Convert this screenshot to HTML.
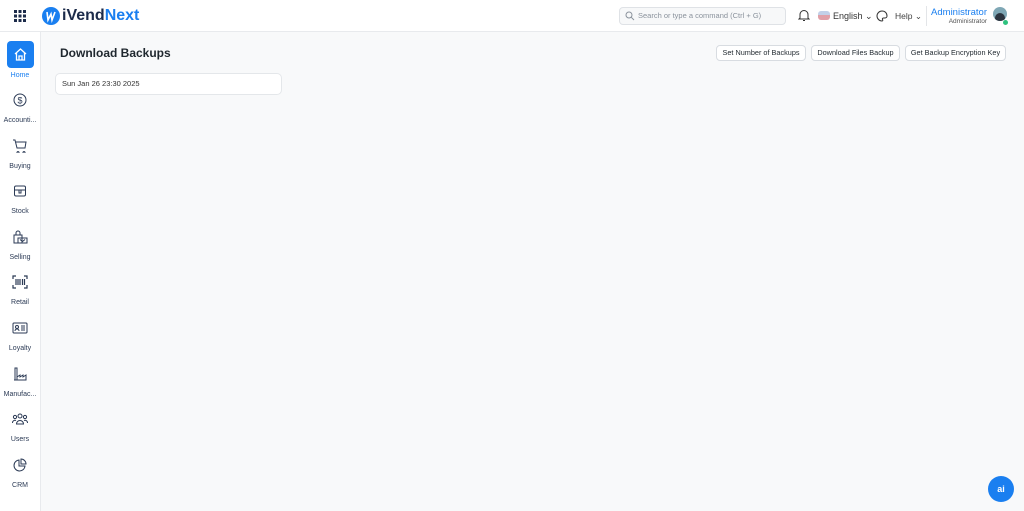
<!DOCTYPE html>
<html><head><meta charset="utf-8"><style>
*{box-sizing:border-box;margin:0;padding:0}
body{width:1024px;height:511px;overflow:hidden;background:#f8f9fa;font-family:"Liberation Sans",sans-serif;color:#1f272e;position:relative}
.hdr{position:absolute;left:0;top:0;width:1024px;height:32px;background:#fff;border-bottom:1px solid #e8eaed}
.side{position:absolute;left:0;top:32px;width:41px;height:479px;background:#fff;border-right:1px solid #e8eaed}
.it{position:absolute;left:0;width:40px;text-align:center;font-size:7px;color:#2b3a55}
.it svg{display:block;margin:0 auto}
.it div{margin-top:10px}
.btn{position:absolute;top:45px;height:16px;border:1px solid #d8dce1;border-radius:4px;background:#fff;font-size:7.3px;line-height:14px;text-align:center;color:#1f272e}
</style></head><body>
<div class="hdr">
 <svg style="position:absolute;left:14px;top:10px" width="12" height="12" viewBox="0 0 12 12" fill="#1c2b4a"><rect x="0" y="0" width="3" height="3"/><rect x="4.5" y="0" width="3" height="3"/><rect x="9" y="0" width="3" height="3"/><rect x="0" y="4.5" width="3" height="3"/><rect x="4.5" y="4.5" width="3" height="3"/><rect x="9" y="4.5" width="3" height="3"/><rect x="0" y="9" width="3" height="3"/><rect x="4.5" y="9" width="3" height="3"/><rect x="9" y="9" width="3" height="3"/></svg>
 <svg style="position:absolute;left:42px;top:7px" width="18" height="18" viewBox="0 0 18 18"><circle cx="9" cy="9" r="9" fill="#1a7ff0"/><path d="M5 5 L6 13 L9 7 L10 13 L13 5" stroke="#fff" stroke-width="1.6" fill="none"/></svg>
 <div style="position:absolute;left:62px;top:7px;font-size:16px;font-weight:bold;color:#1c2b4a">iVend<span style="color:#1a7ff0">Next</span></div>
 <div style="position:absolute;left:619px;top:7px;width:167px;height:18px;border:1px solid #dfe2e6;border-radius:4px;background:#f7f8f9;font-size:7.5px;color:#8a929c;line-height:16px;padding-left:18px">Search or type a command (Ctrl + G)</div>
 <svg style="position:absolute;left:625px;top:11px" width="10" height="10" viewBox="0 0 10 10"><circle cx="4" cy="4" r="3" stroke="#8a929c" fill="none"/><path d="M6.3 6.3 9 9" stroke="#8a929c"/></svg>
 <svg style="position:absolute;left:798px;top:9px" width="12" height="13" viewBox="0 0 12 13"><path d="M2 9V5.5a4 4 0 0 1 8 0V9l1 1H1z M5 11.5h2" stroke="#333" fill="none"/></svg>
 <div style="position:absolute;left:818px;top:11px;width:12px;height:9px;border-radius:3px;background:linear-gradient(#c2d0e8 0 45%,#e0a0a8 45%)"></div>
 <div style="position:absolute;left:833px;top:11px;font-size:9px;color:#333">English ⌄</div>
 <svg style="position:absolute;left:876px;top:10px" width="12" height="12" viewBox="0 0 12 12"><path d="M6 1a5 5 0 1 0 0 10c1 0 1-1 .5-1.5s0-1.5 1-1.5H9a2 2 0 0 0 2-2C11 3 9 1 6 1z" stroke="#333" fill="none"/></svg>
 <div style="position:absolute;left:895px;top:11px;font-size:8.5px;color:#444">Help ⌄</div>
 <div style="position:absolute;left:926px;top:6px;width:1px;height:20px;background:#e3e5e8"></div>
 <div style="position:absolute;right:37px;top:7px;font-size:9.5px;color:#1a7ff0;text-align:right">Administrator</div>
 <div style="position:absolute;right:37px;top:18px;font-size:6.5px;color:#555;text-align:right">Administrator</div>
 <div style="position:absolute;left:993px;top:7px;width:14px;height:14px;border-radius:50%;background:#7fa7b5;overflow:hidden"><div style="margin:6px 0 0 2px;width:10px;height:10px;border-radius:50%;background:#2c3540"></div></div>
 <div style="position:absolute;left:1003px;top:20px;width:5px;height:5px;border-radius:50%;background:#2ec27e"></div>
</div>
<div class="side">
 <div style="position:absolute;left:7px;top:9px;width:27px;height:27px;border-radius:4px;background:#1a7ff0"></div>
 <svg style="position:absolute;left:13px;top:15px" width="15" height="15" viewBox="0 0 15 15"><path d="M2 7 7.5 2 13 7M3.5 6v7h8V6M6 13V9h3v4" stroke="#fff" stroke-width="1.3" fill="none"/></svg>
 <div class="it" style="top:40px;color:#1a7ff0">Home</div>
</div>
<div class="it" style="top:93px"><svg width="14" height="14" viewBox="0 0 14 14"><circle cx="7" cy="7" r="6" stroke="#2b3a55" fill="none"/><text x="7" y="10.5" font-size="9" text-anchor="middle" fill="#2b3a55" font-family="Liberation Sans">$</text></svg><div>Accounti...</div></div>
<div class="it" style="top:139px"><svg width="16" height="14" viewBox="0 0 16 14"><path d="M1 1h2l2 8h8l1-6H4M6 12.5a1 1 0 1 0 .01 0M12 12.5a1 1 0 1 0 .01 0" stroke="#2b3a55" fill="none"/></svg><div>Buying</div></div>
<div class="it" style="top:184px"><svg width="14" height="14" viewBox="0 0 14 14"><rect x="1.5" y="2" width="11" height="10" rx="1.5" stroke="#2b3a55" fill="none"/><path d="M1.5 6h11M6 6v3h2V6" stroke="#2b3a55" fill="none"/></svg><div>Stock</div></div>
<div class="it" style="top:230px"><svg width="16" height="14" viewBox="0 0 16 14"><path d="M2 5h8v8H2zM4 5V3a2 2 0 0 1 4 0v2M6 8h9v5H6zM8 9.5l2.5 2 2.5-2" stroke="#2b3a55" fill="#fff"/></svg><div>Selling</div></div>
<div class="it" style="top:275px"><svg width="16" height="14" viewBox="0 0 16 14"><path d="M1 4V1h3M12 1h3v3M15 10v3h-3M4 13H1v-3M4 4v6M6 4v6M8 4v6M10.5 4v6M12.5 4v6" stroke="#2b3a55" stroke-width="1.2" fill="none"/></svg><div>Retail</div></div>
<div class="it" style="top:321px"><svg width="16" height="14" viewBox="0 0 16 14"><rect x="1" y="2" width="14" height="10" rx="1" stroke="#2b3a55" fill="none"/><circle cx="5" cy="6" r="1.5" stroke="#2b3a55" fill="none"/><path d="M3 10a2 2 0 0 1 4 0M9 5h4M9 7h4M9 9h4" stroke="#2b3a55" fill="none"/></svg><div>Loyalty</div></div>
<div class="it" style="top:367px"><svg width="14" height="14" viewBox="0 0 14 14"><path d="M2 13V1h2v12M1 13h12V8l-3 2V8l-3 2V8l-3 2" stroke="#2b3a55" fill="none"/></svg><div>Manufac...</div></div>
<div class="it" style="top:412px"><svg width="16" height="14" viewBox="0 0 16 14"><circle cx="8" cy="4" r="2" stroke="#2b3a55" fill="none"/><circle cx="3" cy="5" r="1.6" stroke="#2b3a55" fill="none"/><circle cx="13" cy="5" r="1.6" stroke="#2b3a55" fill="none"/><path d="M4.5 12a3.5 3.5 0 0 1 7 0zM0.5 11a2.5 2.5 0 0 1 3.5-2.5M15.5 11a2.5 2.5 0 0 0-3.5-2.5" stroke="#2b3a55" fill="none"/></svg><div>Users</div></div>
<div class="it" style="top:458px"><svg width="14" height="14" viewBox="0 0 14 14"><path d="M6 2a5.5 5.5 0 1 0 6 6H6z M8 1v5h5a5 5 0 0 0-5-5z" stroke="#2b3a55" fill="none"/></svg><div>CRM</div></div>

<div style="position:absolute;left:60px;top:46px;font-size:12px;font-weight:bold;color:#1f272e">Download Backups</div>
<div class="btn" style="left:716px;width:90px">Set Number of Backups</div>
<div class="btn" style="left:811px;width:89px">Download Files Backup</div>
<div class="btn" style="left:905px;width:101px">Get Backup Encryption Key</div>
<div style="position:absolute;left:55px;top:73px;width:227px;height:22px;background:#fff;border:1px solid #e4e7ea;border-radius:5px;font-size:7.5px;line-height:20px;padding-left:6px;color:#333">Sun Jan 26 23:30 2025</div>
<div style="position:absolute;left:988px;top:476px;width:26px;height:26px;border-radius:50%;background:#1a7ff0;color:#fff;font-size:9px;font-weight:bold;text-align:center;line-height:26px">ai</div>
</body></html>
